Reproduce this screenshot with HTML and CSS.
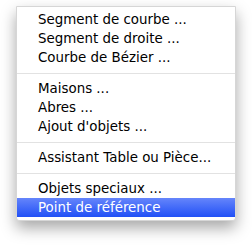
FILE: index.html
```html
<!DOCTYPE html>
<html>
<head>
<meta charset="utf-8">
<link rel="stylesheet" href="styles.css">
</head>
<body>
<div class="menu">
  <div class="item">Segment de courbe ...</div>
  <div class="item">Segment de droite ...</div>
  <div class="item">Courbe de Bézier ...</div>
  <div class="sep"></div>
  <div class="item">Maisons ...</div>
  <div class="item">Abres ...</div>
  <div class="item">Ajout d'objets ...</div>
  <div class="sep"></div>
  <div class="item">Assistant Table ou Pièce...</div>
  <div class="sep"></div>
  <div class="item">Objets speciaux ...</div>
  <div class="item selected">Point de référence</div>
</div>
</body>
</html>
```

FILE: styles.css
```css
html, body {
  margin: 0;
  padding: 0;
  background: #ffffff;
}
body {
  width: 252px;
  height: 249px;
  overflow: hidden;
  font-family: "DejaVu Sans", "Liberation Sans", sans-serif;
  font-size: 13.4px;
}
.menu {
  margin: 6px 0 0 16px;
  width: 218px;
  padding: 3px 0;
  background: #ffffff;
  border: 1px solid #d6d6d6;
  border-radius: 0 0 3px 3px;
  box-shadow: 0 7px 15px rgba(0, 0, 0, 0.35);
}
.item {
  height: 19px;
  line-height: 19px;
  padding-left: 21px;
  color: #000000;
  white-space: nowrap;
}
.item.selected {
  background: linear-gradient(#6585fb, #2150f6);
  color: #ffffff;
}
.sep {
  height: 1px;
  margin: 6px 0 5px;
  background: #e2e2e2;
}
```
